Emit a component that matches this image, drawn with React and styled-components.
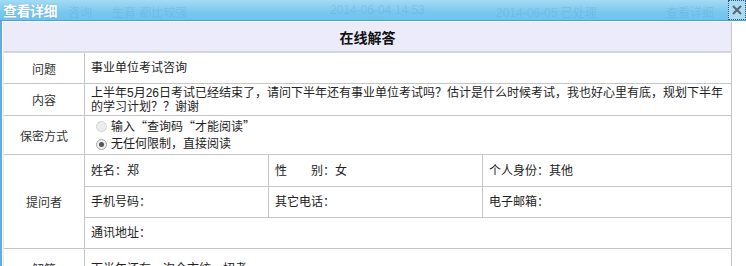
import React from "react";
import styled, { createGlobalStyle } from "styled-components";

const Global = createGlobalStyle`
  html, body { margin: 0; padding: 0; background: #ffffff; }
  body { font-family: "Liberation Sans", "Noto Sans CJK SC", sans-serif; font-size: 12px; color: #222; }
  * { box-sizing: border-box; }
`;

const Window = styled.div`
  width: 746px;
  height: 266px;
  overflow: hidden;
  background: #fff;
`;

const TitleBar = styled.div`
  position: relative;
  height: 21px;
  display: flex;
  align-items: center;
  justify-content: space-between;
  background: linear-gradient(#a3dbf5, #78c8ee 60%, #6fc3ec);
  border-bottom: 1px solid #4aa2d6;
`;

const Title = styled.span`
  position: relative;
  z-index: 1;
  padding-left: 3px;
  color: #fff;
  font-weight: bold;
  font-size: 14px;
  letter-spacing: -0.5px;
  text-shadow: 0 0 1px rgba(40, 110, 160, 0.6);
`;

const Ghost = styled.span`
  position: absolute;
  top: 3px;
  left: ${(p) => p.$x}px;
  color: rgba(70, 140, 190, 0.2);
  font-size: 12px;
  white-space: nowrap;
`;

const Close = styled.button`
  position: relative;
  z-index: 1;
  width: 18px;
  height: 20px;
  margin: 0;
  padding: 0;
  display: flex;
  align-items: center;
  justify-content: center;
  background: #a9ddf4;
  border: 1px dotted #34506a;
`;

const Body = styled.div`
  border-left: 2px solid #5aaee0;
  padding-top: 1px;
  padding-left: 1px;
`;

const Grid = styled.div`
  display: grid;
  width: 728px;
  grid-template-columns: 81px 184px 214px 249px;
  grid-template-rows: 31px 31px 32px 39px 32px 31px 31px 40px;
  border-left: 1px solid #f2e4e8;
`;

const Header = styled.div`
  grid-column: 1 / span 4;
  display: flex;
  align-items: center;
  justify-content: center;
  background: #ebebfa;
  border-bottom: 2px solid #d4d4dc;
  border-right: 1px solid #c8c8c8;
  font-size: 14px;
  font-weight: bold;
  color: #111;
`;

const Label = styled.div`
  grid-row: ${(p) => p.$rows || "auto"};
  display: flex;
  align-items: center;
  justify-content: center;
  border-right: 1px solid #c6c6c6;
  border-bottom: 1px solid #c6c6c6;
  color: #333;
  font-size: 12px;
`;

const Cell = styled.div`
  grid-column: ${(p) => (p.$span ? `span ${p.$span}` : "auto")};
  display: flex;
  flex-direction: column;
  justify-content: center;
  padding: 0 6px 0 6px;
  border-right: 1px solid #c6c6c6;
  border-bottom: 1px solid #c6c6c6;
  color: #222;
  font-size: 12px;
  line-height: 14px;
`;

const RadioLine = styled.div`
  display: flex;
  align-items: center;
  height: 18px;
  padding-left: 5px;
  gap: 4px;
`;

const Wide = styled.span`
  font-family: "Noto Sans CJK SC", sans-serif;
`;

const RadioDot = styled.span`
  width: 11px;
  height: 11px;
  border-radius: 50%;
  border: 1px solid ${(p) => (p.$checked ? "#a8a8a8" : "#d2d2d2")};
  background: ${(p) => (p.$checked ? "#eeeeee" : "#ececec")};
  display: flex;
  align-items: center;
  justify-content: center;
  &::after {
    content: "";
    width: 5px;
    height: 5px;
    border-radius: 50%;
    background: ${(p) => (p.$checked ? "#555" : "transparent")};
  }
`;

export default function App() {
  return (
    <Window>
      <Global />
      <TitleBar>
        <Ghost $x={68}>咨询</Ghost>
        <Ghost $x={112}>生育 都比较强</Ghost>
        <Ghost $x={330}>2014-06-04 14:53</Ghost>
        <Ghost $x={496}>2014-06-05 已处理</Ghost>
        <Ghost $x={666}>查看详细</Ghost>
        <Title>查看详细</Title>
        <Close aria-label="关闭">
          <svg width="12" height="12" viewBox="0 0 12 12">
            <path d="M2 2 L10 10 M10 2 L2 10" stroke="#5d6670" strokeWidth="2" />
          </svg>
        </Close>
      </TitleBar>
      <Body>
        <Grid>
          <Header>在线解答</Header>

          <Label>问题</Label>
          <Cell $span={3}>事业单位考试咨询</Cell>

          <Label>内容</Label>
          <Cell $span={3}>
            上半年5月26日考试已经结束了，请问下半年还有事业单位考试吗？估计是什么时候考试，我也好心里有底，规划下半年的学习计划？？谢谢
          </Cell>

          <Label>保密方式</Label>
          <Cell $span={3}>
            <RadioLine>
              <RadioDot />
              <Wide>输入“查询码“才能阅读”</Wide>
            </RadioLine>
            <RadioLine>
              <RadioDot $checked />
              无任何限制，直接阅读
            </RadioLine>
          </Cell>

          <Label $rows="span 3">提问者</Label>
          <Cell>姓名：郑</Cell>
          <Cell>性　　别：女</Cell>
          <Cell>个人身份：其他</Cell>
          <Cell>手机号码：</Cell>
          <Cell>其它电话：</Cell>
          <Cell>电子邮箱：</Cell>
          <Cell $span={3}>通讯地址：</Cell>

          <Label>解答</Label>
          <Cell $span={3}>下半年还有一次全市统一招考</Cell>
        </Grid>
      </Body>
    </Window>
  );
}
